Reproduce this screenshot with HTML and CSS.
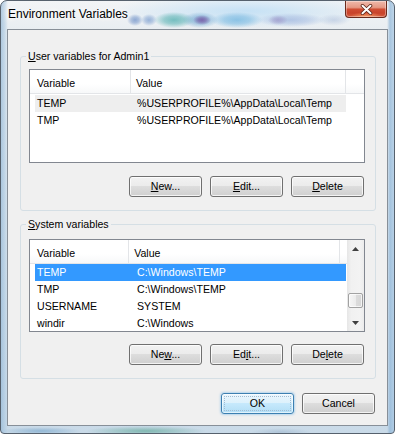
FILE: index.html
```html
<!DOCTYPE html>
<html>
<head>
<meta charset="utf-8">
<title>Environment Variables</title>
<link rel="stylesheet" href="styles.css">
</head>
<body>
<div class="window">
  <div class="titlebar">
    <div class="title">Environment Variables</div>
    <div class="close">
      <svg width="13" height="11" viewBox="0 0 13 11">
        <path d="M2.5 1.8 L10.5 9.2 M10.5 1.8 L2.5 9.2" stroke="#5a2418" stroke-width="3.6" stroke-linecap="round" fill="none"/>
        <path d="M2.5 1.8 L10.5 9.2 M10.5 1.8 L2.5 9.2" stroke="#ffffff" stroke-width="2" stroke-linecap="round" fill="none"/>
      </svg>
    </div>
  </div>
  <div class="client">
    <fieldset class="group group-user">
      <legend><u>U</u>ser variables for Admin1</legend>
      <div class="list list-user">
        <div class="lv">
          <div class="lv-header">
            <div class="hcell hc1">Variable</div>
            <div class="hcell hc2">Value</div>
            <div class="hcell hc3"></div>
          </div>
          <div class="rows rows-user">
            <div class="row hot"><span class="c1">TEMP</span><span class="c2">%USERPROFILE%\AppData\Local\Temp</span></div>
            <div class="row"><span class="c1">TMP</span><span class="c2">%USERPROFILE%\AppData\Local\Temp</span></div>
          </div>
        </div>
      </div>
      <div class="btnrow btnrow-user">
        <button class="btn"><u>N</u>ew...</button>
        <button class="btn"><u>E</u>dit...</button>
        <button class="btn"><u>D</u>elete</button>
      </div>
    </fieldset>

    <fieldset class="group group-sys">
      <legend><u>S</u>ystem variables</legend>
      <div class="list list-sys">
        <div class="lv">
          <div class="lv-header">
            <div class="hcell hc1">Variable</div>
            <div class="hcell hc2">Value</div>
            <div class="hcell hc3"></div>
          </div>
          <div class="rows">
            <div class="row sel"><span class="c1">TEMP</span><span class="c2">C:\Windows\TEMP</span></div>
            <div class="row"><span class="c1">TMP</span><span class="c2">C:\Windows\TEMP</span></div>
            <div class="row"><span class="c1">USERNAME</span><span class="c2">SYSTEM</span></div>
            <div class="row"><span class="c1">windir</span><span class="c2">C:\Windows</span></div>
          </div>
        </div>
        <div class="vscroll">
          <div class="sb-btn">
            <svg width="7" height="4" viewBox="0 0 7 4"><polygon points="3.5,0 7,4 0,4" fill="#404040"/></svg>
          </div>
          <div class="sb-track">
            <div class="sb-thumb"></div>
          </div>
          <div class="sb-btn">
            <svg width="7" height="4" viewBox="0 0 7 4"><polygon points="0,0 7,0 3.5,4" fill="#404040"/></svg>
          </div>
        </div>
      </div>
      <div class="btnrow btnrow-sys">
        <button class="btn">Ne<u>w</u>...</button>
        <button class="btn">Ed<u>i</u>t...</button>
        <button class="btn">De<u>l</u>ete</button>
      </div>
    </fieldset>

    <div class="dlg-buttons">
      <button class="btn btn-default">OK</button>
      <button class="btn">Cancel</button>
    </div>
  </div>
</div>
</body>
</html>
```

FILE: styles.css
```css
* {
  box-sizing: border-box;
}

html, body {
  margin: 0;
  padding: 0;
}

body {
  width: 395px;
  height: 434px;
  overflow: hidden;
  background: #ffffff;
  font-family: "Liberation Sans", Arial, sans-serif;
  font-size: 10.6px;
  color: #000000;
}

/* ---------- window frame (Aero glass) ---------- */
.window {
  width: 395px;
  height: 434px;
  border: 1px solid #56616d;
  border-radius: 7px 7px 4px 4px;
  padding: 0 6px 7px 6px;
  display: flex;
  flex-direction: column;
  background-color: #dde6ed;
  background-image:
    radial-gradient(ellipse 9px 5px at 201px 19px, rgba(120, 90, 165, 0.85) 0%, rgba(120, 90, 165, 0.6) 45%, rgba(120, 90, 165, 0) 100%),
    radial-gradient(ellipse 10px 5px at 277px 19px, rgba(150, 140, 195, 0.6) 0%, rgba(150, 140, 195, 0.4) 45%, rgba(150, 140, 195, 0) 100%),
    radial-gradient(ellipse 8px 6px at 134px 19px, rgba(110, 145, 200, 0.75) 0%, rgba(110, 145, 200, 0.5) 50%, rgba(110, 145, 200, 0) 100%),
    radial-gradient(ellipse 8px 6px at 148px 19px, rgba(120, 155, 205, 0.7) 0%, rgba(120, 155, 205, 0.45) 50%, rgba(120, 155, 205, 0) 100%),
    radial-gradient(ellipse 20px 8px at 173px 19px, rgba(90, 178, 178, 0.8) 0%, rgba(90, 178, 178, 0.55) 50%, rgba(90, 178, 178, 0) 100%),
    radial-gradient(ellipse 18px 8px at 199px 19px, rgba(100, 160, 205, 0.7) 0%, rgba(100, 160, 205, 0.45) 50%, rgba(100, 160, 205, 0) 100%),
    radial-gradient(ellipse 26px 8px at 236px 19px, rgba(120, 185, 225, 0.8) 0%, rgba(120, 185, 225, 0.55) 50%, rgba(120, 185, 225, 0) 100%),
    radial-gradient(ellipse 34px 7px at 290px 19px, rgba(160, 182, 222, 0.7) 0%, rgba(160, 182, 222, 0.45) 50%, rgba(160, 182, 222, 0) 100%),
    radial-gradient(ellipse 16px 6px at 333px 19px, rgba(175, 192, 220, 0.55) 0%, rgba(175, 192, 220, 0.3) 50%, rgba(175, 192, 220, 0) 100%),
    radial-gradient(ellipse 135px 17px at 245px 10px, rgba(190, 222, 245, 0.85), rgba(190, 222, 245, 0) 100%),
    radial-gradient(ellipse 60px 5px at 145px 430px, rgba(80, 160, 140, 0.6), rgba(80, 160, 140, 0) 100%),
    radial-gradient(ellipse 40px 4px at 40px 430px, rgba(110, 160, 200, 0.6), rgba(110, 160, 200, 0) 100%),
    radial-gradient(ellipse 30px 4px at 280px 431px, rgba(150, 175, 200, 0.5), rgba(150, 175, 200, 0) 100%),
    linear-gradient(to right, rgba(150, 185, 215, 0.7) 0px, rgba(170, 200, 225, 0.5) 4px, rgba(255, 255, 255, 0) 7px, rgba(255, 255, 255, 0) 386px, rgba(140, 180, 215, 0.7) 389px, rgba(160, 195, 225, 0.6) 393px),
    linear-gradient(to bottom, #f2f4f6 0px, #e9eef2 28px, #dbe5ed 200px, #c9dae8 434px);
}

.titlebar {
  height: 28px;
  display: flex;
  align-items: flex-start;
}

.title {
  flex: 1;
  padding: 5px 0 0 1px;
  font-size: 12px;
  line-height: 16px;
  color: #000000;
  text-shadow: 0 0 5px #ffffff, 0 0 9px #ffffff, 0 0 12px #ffffff;
}

.close {
  width: 42px;
  height: 17px;
  margin-right: 1px;
  border: 1px solid #6a2a1c;
  border-top: none;
  border-radius: 0 0 4px 4px;
  display: flex;
  align-items: center;
  justify-content: center;
  background:
    radial-gradient(ellipse 16px 5px at 50% 100%, rgba(255, 170, 110, 0.85), rgba(255, 170, 110, 0) 100%),
    linear-gradient(to bottom, #efb9ab 0%, #e59985 40%, #cf4d33 52%, #c8432a 75%, #d55c3f 100%);
  box-shadow: inset 0 0 0 1px rgba(255, 255, 255, 0.35);
}

/* ---------- client area ---------- */
.client {
  flex: 1;
  border: 1px solid #878f98;
  background: #f0f0f0;
  display: flex;
  flex-direction: column;
}

.group {
  margin: 0 11px 0 12px;
  padding: 0 0 13px 0;
  border: 1px solid #d5dfe5;
  border-radius: 3px;
  min-width: 0;
}

.group legend {
  margin-left: 5px;
  padding: 0 2px;
  line-height: 14px;
}

.group-user {
  margin-top: 19px;
}

.group-sys {
  margin-top: 6px;
}

/* ---------- list views ---------- */
.list {
  margin: 6px 10px 0 8px;
  height: 94px;
  border: 1px solid #828790;
  background: #ffffff;
  overflow: hidden;
  display: flex;
}

.list-sys {
  margin-top: 8px;
  height: 93px;
}

.lv {
  flex: 1;
  min-width: 0;
  overflow: hidden;
}

.lv-header {
  display: flex;
  height: 24px;
  border-bottom: 1px solid #e3e5e8;
  background: linear-gradient(to bottom, #ffffff 0%, #ffffff 60%, #f7f8f9 100%);
}

.hcell {
  padding: 4px 0 0 7px;
  line-height: 19px;
  border-right: 1px solid #e3e5e8;
  white-space: nowrap;
}

.hc1 {
  width: 101px;
}

.hc2 {
  width: 215px;
  padding-left: 5px;
}

.hc3 {
  flex: 1;
  border-right: none;
}

.rows-user {
  padding-top: 1px;
}

.row {
  display: flex;
  margin-left: 5px;
  width: 311px;
  height: 17px;
  line-height: 17px;
  white-space: nowrap;
}

.row .c1 {
  width: 96px;
  padding-left: 2px;
}

.row .c2 {
  padding-left: 6px;
}

.row.hot {
  background: #eeeeee;
}

.row.sel {
  background: #3399ff;
  color: #ffffff;
}

/* ---------- scrollbar ---------- */
.vscroll {
  width: 17px;
  display: flex;
  flex-direction: column;
  background: linear-gradient(to right, #e6e6e6 0%, #f1f1f1 25%, #f3f3f3 75%, #ececec 100%);
}

.sb-btn {
  height: 17px;
  display: flex;
  align-items: center;
  justify-content: center;
}

.sb-track {
  flex: 1;
  display: flex;
  flex-direction: column;
}

.sb-thumb {
  margin: 36px 1px 0 1px;
  height: 15px;
  border: 1px solid #a2a2a2;
  border-radius: 2px;
  background: linear-gradient(to right, #f6f6f6 0%, #ececec 50%, #dcdcdc 51%, #d6d6d6 100%);
  box-shadow: inset 0 0 0 1px rgba(255, 255, 255, 0.7);
}

/* ---------- buttons ---------- */
.btnrow {
  display: flex;
  justify-content: flex-end;
  gap: 8px;
  margin: 13px 11px 0 0;
}

.btnrow-sys {
  margin-top: 12px;
}

.dlg-buttons {
  display: flex;
  justify-content: flex-end;
  gap: 8px;
  margin: 14px 12px 0 0;
}

.btn {
  width: 73px;
  height: 21px;
  padding: 0;
  margin: 0;
  border: 1px solid #707070;
  border-radius: 3px;
  font-family: inherit;
  font-size: 10.6px;
  line-height: 19px;
  color: #000000;
  text-align: center;
  background: linear-gradient(to bottom, #f2f2f2 0%, #ebebeb 49%, #dddddd 50%, #cfcfcf 100%);
  box-shadow: inset 0 0 0 1px rgba(255, 255, 255, 0.75);
}

.btn-default {
  position: relative;
  border-color: #3c7fb1;
  background: linear-gradient(to bottom, #eaf6fd 0%, #dcf1fc 49%, #c6e9fc 50%, #b2def6 100%);
  box-shadow: inset 0 0 0 1px rgba(255, 255, 255, 0.6), 0 0 2px 1px rgba(110, 180, 230, 0.45);
}

.btn-default::after {
  content: "";
  position: absolute;
  top: 2px;
  left: 2px;
  right: 2px;
  bottom: 2px;
  border: 1px dotted #a3bcd2;
}
```
